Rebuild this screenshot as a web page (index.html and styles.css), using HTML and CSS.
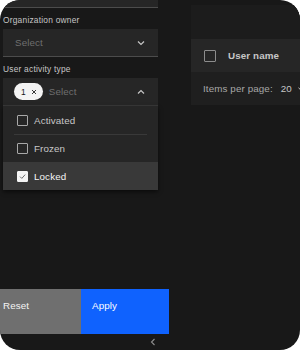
FILE: index.html
```html
<!DOCTYPE html>
<html lang="en">
<head>
<meta charset="utf-8">
<title>Filter flyout</title>
<link rel="stylesheet" href="styles.css">
</head>
<body>
<div class="screen">
  <aside class="flyout">
    <div class="fields">
      <div class="field stub"></div>

      <div class="form-item">
        <div class="label">Organization owner</div>
        <div class="field">
          <span class="placeholder">Select</span>
          <svg class="chev" width="8" height="6" viewBox="0 0 8 6"><polyline points="1,1.5 4,4.5 7,1.5" fill="none" stroke="#c6c6c6" stroke-width="1.2"/></svg>
        </div>
      </div>

      <div class="form-item">
        <div class="label">User activity type</div>
        <div class="field open">
          <span class="tag">1
            <svg class="tag-x" width="6" height="6" viewBox="0 0 6 6"><path d="M1 1 L5 5 M5 1 L1 5" stroke="#393939" stroke-width="1"/></svg>
          </span>
          <span class="placeholder">Select</span>
          <svg class="chev" width="8" height="6" viewBox="0 0 8 6"><polyline points="1,4.5 4,1.5 7,4.5" fill="none" stroke="#c6c6c6" stroke-width="1.2"/></svg>
        </div>
        <ul class="menu">
          <li class="option"><div class="option-inner"><span class="cb"></span>Activated</div></li>
          <li class="option"><div class="option-inner"><span class="cb"></span>Frozen</div></li>
          <li class="option selected"><div class="option-inner"><span class="cb checked"><svg width="9" height="9" viewBox="0 0 9 9"><polyline points="2,4.6 3.8,6.4 7.2,2.6" fill="none" stroke="#6f6f6f" stroke-width="1"/></svg></span>Locked</div></li>
        </ul>
      </div>
    </div>

    <div class="actions">
      <button class="btn btn-secondary">Reset</button>
      <button class="btn btn-primary">Apply</button>
    </div>
    <div class="foot">
      <svg width="6" height="8" viewBox="0 0 6 8"><polyline points="4.5,1 1.5,4 4.5,7" fill="none" stroke="#8d8d8d" stroke-width="1.1"/></svg>
    </div>
  </aside>

  <main class="content">
    <section class="table-panel">
      <div class="toolbar"></div>
      <div class="thead">
        <span class="cb"></span>
        <span class="th">User name</span>
      </div>
      <div class="pagination">
        <span class="pg-label">Items per page:</span>
        <span class="pg-value">20</span>
        <svg width="6" height="4" viewBox="0 0 6 4"><polyline points="0.5,0.8 3,3.2 5.5,0.8" fill="none" stroke="#c6c6c6" stroke-width="1"/></svg>
      </div>
    </section>
  </main>
</div>
</body>
</html>
```

FILE: styles.css
```css
* { box-sizing: border-box; }

html, body {
  margin: 0;
  padding: 0;
  background: #ffffff;
}

body {
  font-family: "Liberation Sans", Arial, sans-serif;
  color: #c6c6c6;
}

.screen {
  width: 300px;
  height: 350px;
  background: #181818;
  border-radius: 20px;
  overflow: hidden;
  display: flex;
}

/* ---------- Flyout ---------- */
.flyout {
  width: 169px;
  flex: 0 0 169px;
  display: flex;
  flex-direction: column;
}

.fields {
  flex: 1;
  padding: 0 11px 0 3px;
}

.field {
  height: 28px;
  background: #262626;
  border-bottom: 1px solid #4c4c4c;
  display: flex;
  align-items: center;
  padding: 0 13px 0 12px;
  font-size: 9.8px;
  letter-spacing: 0.11px;
}

.field.stub {
  height: 8px;
}

.field.open {
  border-bottom-color: #393939;
  padding-left: 11px;
}

.form-item {
  margin-top: 7px;
}

.label {
  font-size: 8.4px;
  line-height: 11px;
  letter-spacing: 0.22px;
  color: #c6c6c6;
  margin-bottom: 3px;
}

.placeholder {
  color: #6f6f6f;
  flex: 1;
}

.chev {
  display: block;
}

.tag {
  display: inline-flex;
  align-items: center;
  gap: 5px;
  height: 17px;
  padding: 0 6px 0 7px;
  margin-right: 6px;
  border-radius: 9px;
  background: #f4f4f4;
  color: #161616;
  font-size: 8.4px;
}

.tag-x { display: block; }

.menu {
  list-style: none;
  margin: 0;
  padding: 0;
  background: #262626;
  box-shadow: 0 2px 4px rgba(0, 0, 0, 0.55);
}

.option {
  height: 28px;
  padding: 0 11px;
  font-size: 9.8px;
  letter-spacing: 0.11px;
  color: #c6c6c6;
}

.option + .option .option-inner {
  border-top: 1px solid #393939;
}

.option.selected {
  background: #393939;
  color: #f4f4f4;
}

.option.selected .option-inner {
  border-top-color: transparent;
}

.option-inner {
  height: 100%;
  display: flex;
  align-items: center;
  gap: 6px;
  padding-left: 3px;
}

.cb {
  width: 11px;
  height: 11px;
  border: 1px solid #a8a8a8;
  border-radius: 1px;
  flex: 0 0 11px;
  display: flex;
  align-items: center;
  justify-content: center;
}

.cb.checked {
  background: #f4f4f4;
  border-color: #f4f4f4;
}

.cb svg { display: block; }

.actions {
  display: flex;
  height: 45px;
}

.btn {
  border: 0;
  margin: 0;
  height: 100%;
  font-family: inherit;
  font-size: 9.8px;
  letter-spacing: 0.11px;
  text-align: left;
  display: flex;
  align-items: flex-start;
  padding-top: 11px;
  color: #f4f4f4;
}

.btn-secondary {
  width: 81px;
  background: #6f6f6f;
  padding-left: 3px;
}

.btn-primary {
  flex: 1;
  background: #0f62fe;
  padding-left: 11px;
  color: #ffffff;
}

.foot {
  height: 16px;
  display: flex;
  align-items: center;
  justify-content: flex-end;
  padding-right: 13px;
}

.foot svg { display: block; }

/* ---------- Content ---------- */
.content {
  flex: 1;
  padding: 5px 0 0 22px;
}

.table-panel {
  width: 140px;
  background: #1f1f1f;
}

.toolbar {
  height: 34px;
  background: #1c1c1c;
}

.thead {
  height: 33px;
  background: #262626;
  display: flex;
  align-items: center;
  padding-left: 13px;
  gap: 12px;
}

.thead .cb {
  width: 12px;
  height: 12px;
  flex-basis: 12px;
  border-color: #8d8d8d;
}

.th {
  font-size: 9.8px;
  font-weight: bold;
  color: #c6c6c6;
  letter-spacing: 0.11px;
}

.pagination {
  height: 33px;
  display: flex;
  align-items: center;
  padding-left: 12px;
  font-size: 9.8px;
  color: #a8a8a8;
  letter-spacing: 0.11px;
}

.pg-value {
  margin-left: 8px;
  color: #c6c6c6;
}

.pagination svg {
  display: block;
  margin-left: 6px;
}
```
